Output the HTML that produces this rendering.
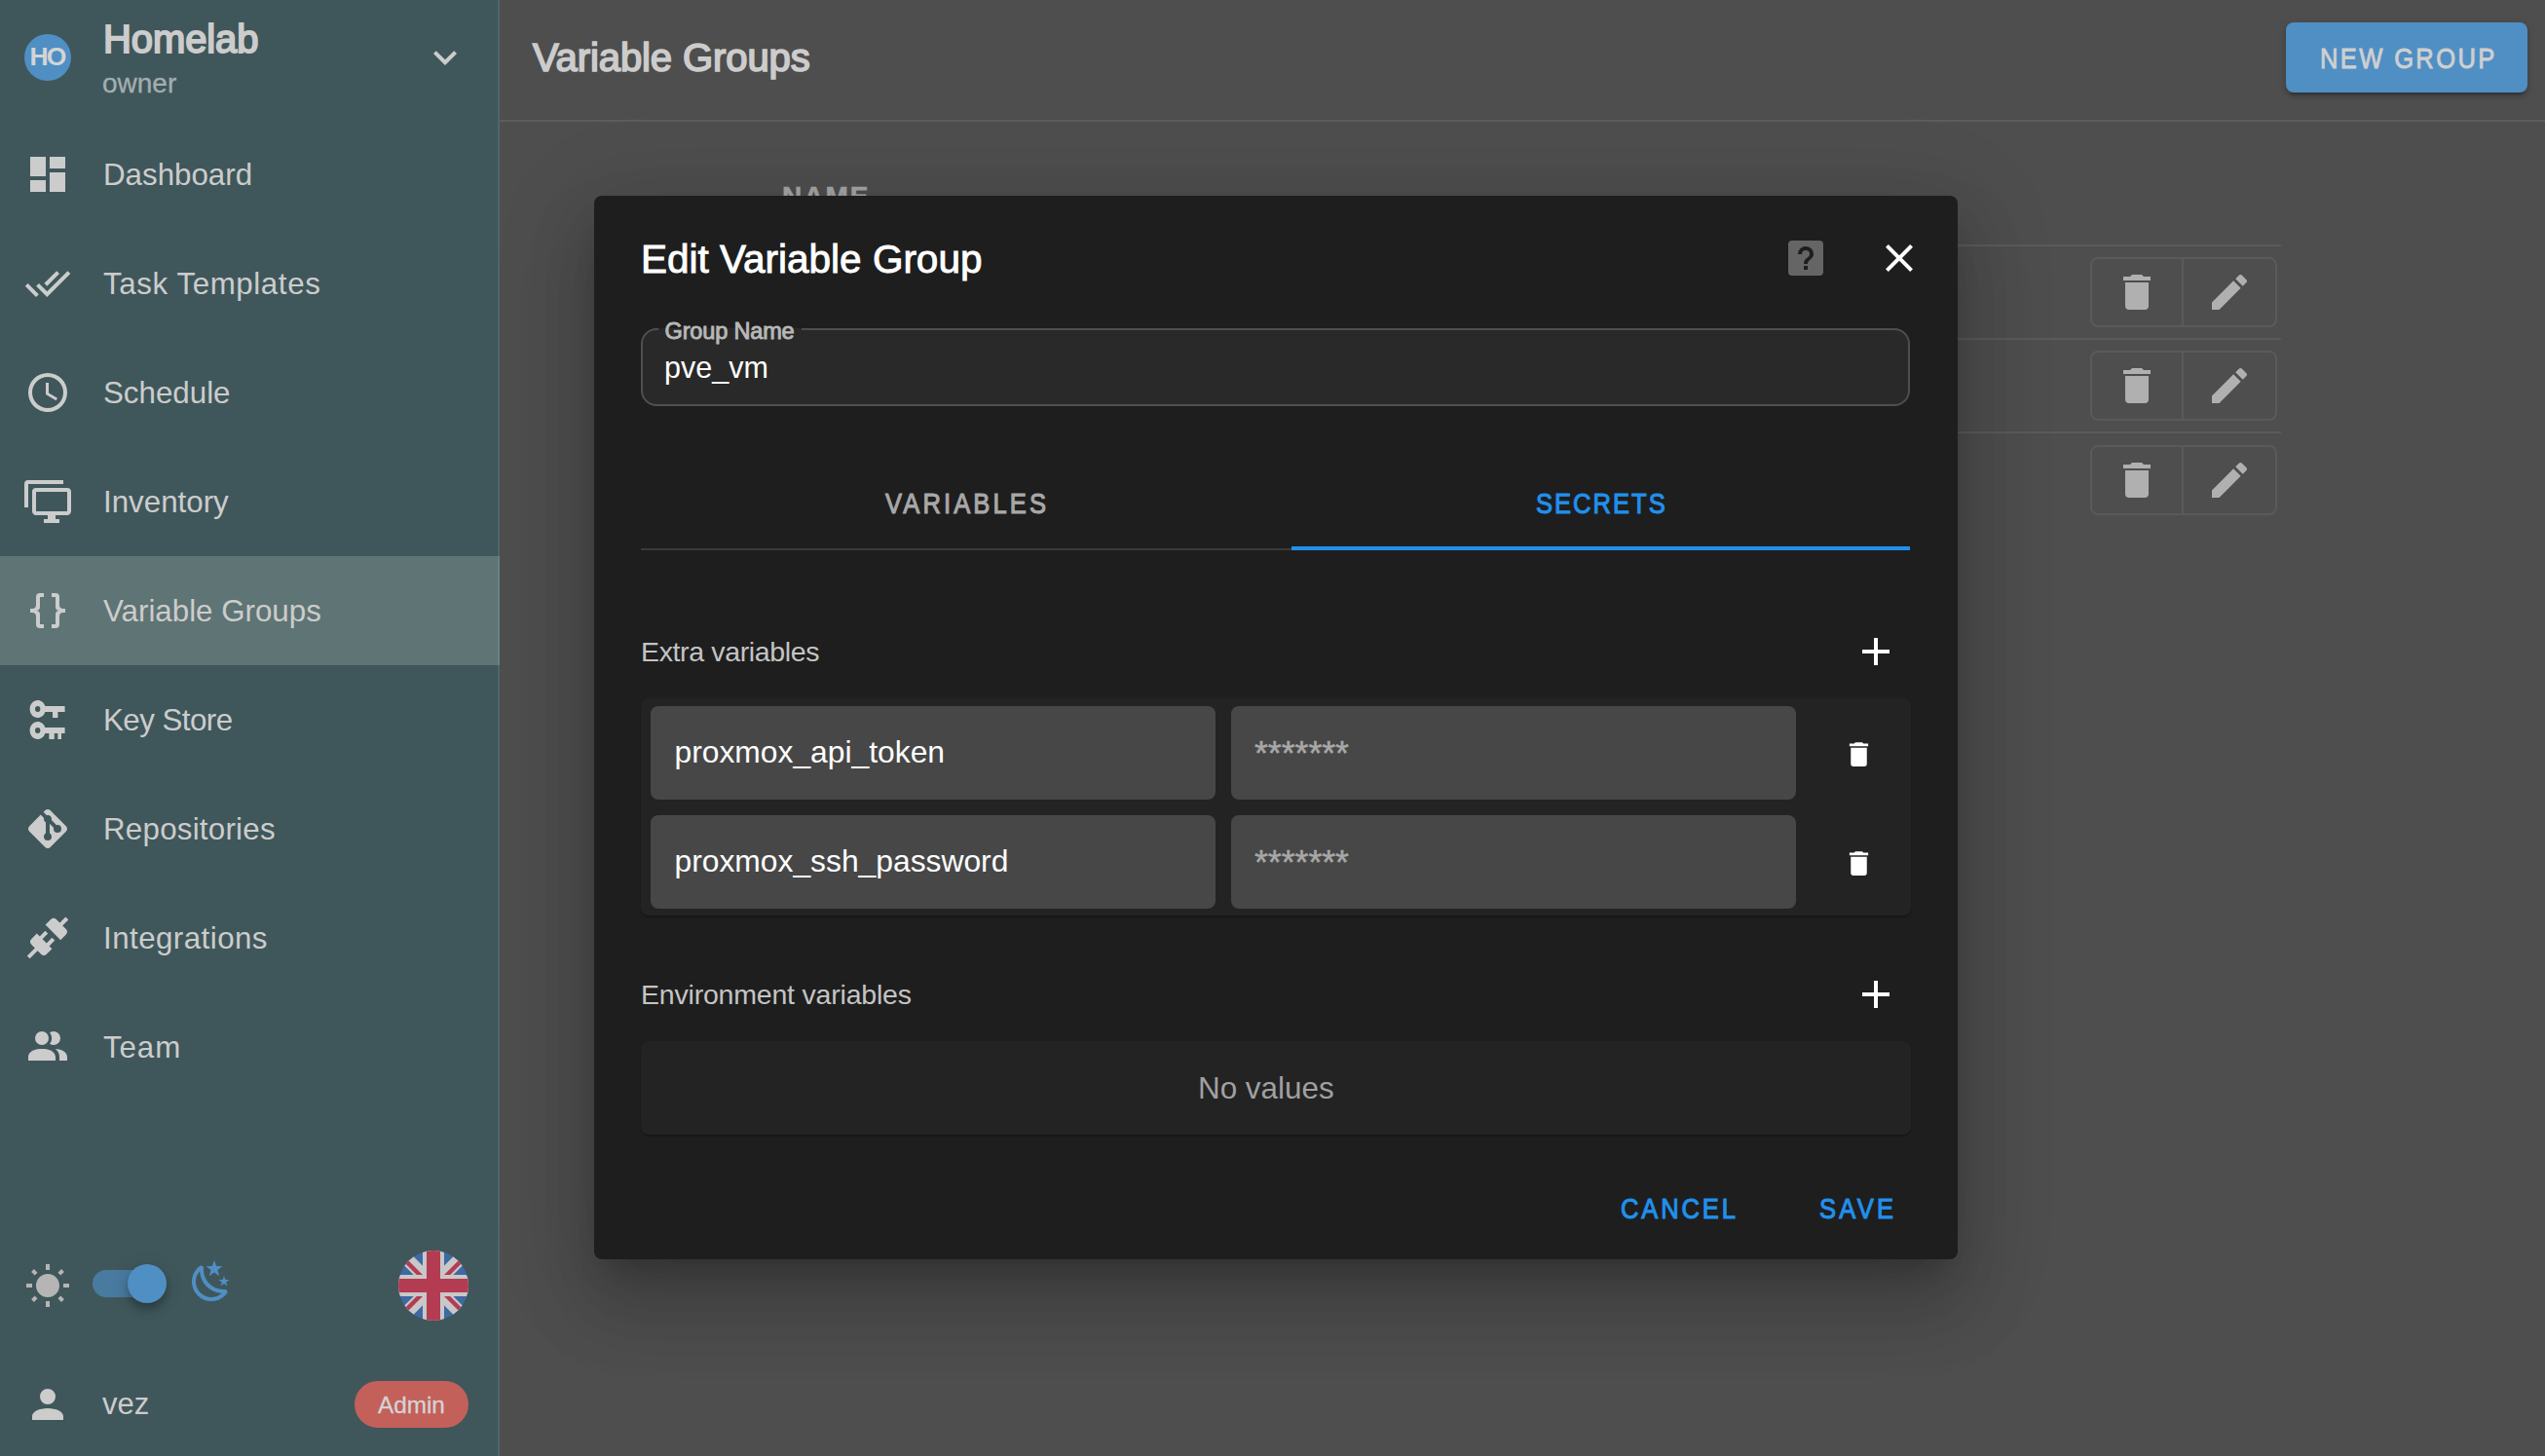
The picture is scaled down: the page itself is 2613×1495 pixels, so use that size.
<!DOCTYPE html>
<html><head><meta charset="utf-8">
<style>
html,body{margin:0;padding:0}
body{width:2613px;height:1495px;overflow:hidden;position:relative;background:#4e4e4e;font-family:"Liberation Sans",sans-serif}
.a{position:absolute}
.t{position:absolute;line-height:1;white-space:nowrap}
svg{position:absolute;display:block}
#sb{left:0;top:0;width:511px;height:1495px;background:#3f575b;border-right:2px solid #4f666a}
.nav{color:#cccccc;font-size:31.3px}
.ic{fill:#cccccc}
.btn{font-size:29px;transform:scaleX(.88);transform-origin:0 0}
.kf{width:580px;height:96px;background:#474747;border-radius:8px}
</style></head><body>

<!-- SIDEBAR -->
<div id="sb" class="a">
  <!-- header -->
  <div class="a" style="left:25px;top:35px;width:48px;height:48px;border-radius:50%;background:#4f8fc4"></div>
  <div class="t" style="left:30.5px;top:45px;font-size:26.5px;font-weight:bold;color:#d4d4d4;letter-spacing:-2px">HO</div>
  <div class="t" style="left:106px;top:20.3px;font-size:40px;letter-spacing:-0.1px;color:#cccccc;-webkit-text-stroke:1.9px #cccccc">Homelab</div>
  <div class="t" style="left:105px;top:71.5px;font-size:28px;color:#a4aeaf;-webkit-text-stroke:0.3px #a4aeaf">owner</div>
  <svg style="left:433px;top:35px" width="48" height="48" viewBox="0 0 24 24"><path class="ic" d="M7.41,8.58L12,13.17L16.59,8.58L18,10L12,16L6,10L7.41,8.58Z"/></svg>

  <!-- active -->
  <div class="a" style="left:0;top:571px;width:513px;height:112px;background:#5f7474"></div>
  <div class="a" style="left:511px;top:571px;width:2px;height:112px;background:#6b8080"></div>

  <!-- nav items: item i top=123+112i, icon top = top+32, text baseline = top+67 -->
  <svg style="left:25px;top:155px" width="48" height="48" viewBox="0 0 24 24"><path class="ic" d="M13,3V9H21V3M13,21H21V11H13M3,21H11V15H3M3,13H11V3H3V13Z"/></svg>
  <div class="t nav" style="left:106px;top:163.5px">Dashboard</div>

  <svg style="left:25px;top:267px" width="48" height="48" viewBox="0 0 24 24"><path class="ic" d="M0.41,13.41L6,19L7.41,17.58L1.83,12M22.24,5.58L11.66,16.17L7.5,12L6.07,13.41L11.66,19L23.66,7M18,7L16.59,5.58L10.24,11.93L11.66,13.34L18,7Z"/></svg>
  <div class="t nav" style="left:106px;top:275.5px;letter-spacing:0.59px">Task Templates</div>

  <svg style="left:25px;top:379px" width="48" height="48" viewBox="0 0 24 24"><path class="ic" d="M12,20A8,8 0 0,0 20,12A8,8 0 0,0 12,4A8,8 0 0,0 4,12A8,8 0 0,0 12,20M12,2A10,10 0 0,1 22,12A10,10 0 0,1 12,22C6.47,22 2,17.5 2,12A10,10 0 0,1 12,2M12.5,7V12.25L17,14.92L16.25,16.15L11,13V7H12.5Z"/></svg>
  <div class="t nav" style="left:106px;top:387.5px">Schedule</div>

  <svg style="left:25px;top:491px" width="48" height="48" viewBox="0 0 24 24"><path class="ic" d="M22,17V7H6V17H22M22,5A2,2 0 0,1 24,7V17C24,18.11 23.1,19 22,19H16V21H18V23H10V21H12V19H6C4.89,19 4,18.11 4,17V7A2,2 0 0,1 6,5H22M2,3V15H0V3A2,2 0 0,1 2,1H20V3H2Z"/></svg>
  <div class="t nav" style="left:106px;top:499.5px">Inventory</div>

  <svg style="left:25px;top:603px" width="48" height="48" viewBox="0 0 24 24"><path class="ic" d="M8,3A2,2 0 0,0 6,5V9A2,2 0 0,1 4,11H3V13H4A2,2 0 0,1 6,15V19A2,2 0 0,0 8,21H10V19H8V14A2,2 0 0,0 6,12A2,2 0 0,0 8,10V5H10V3M16,3A2,2 0 0,1 18,5V9A2,2 0 0,0 20,11H21V13H20A2,2 0 0,0 18,15V19A2,2 0 0,1 16,21H14V19H16V14A2,2 0 0,1 18,12A2,2 0 0,1 16,10V5H14V3H16Z"/></svg>
  <div class="t nav" style="left:106px;top:611.5px">Variable Groups</div>

  <svg style="left:27.4px;top:715px" width="43.2" height="48" viewBox="0 0 24 24" preserveAspectRatio="none"><path class="ic" d="M6.5,2C8.46,2 10.13,3.25 10.74,5H22V8H18V11H15V8H10.74C10.13,9.75 8.46,11 6.5,11C4,11 2,9 2,6.5C2,4 4,2 6.5,2M6.5,5A1.5,1.5 0 0,0 5,6.5A1.5,1.5 0 0,0 6.5,8A1.5,1.5 0 0,0 8,6.5A1.5,1.5 0 0,0 6.5,5M6.5,13C8.46,13 10.13,14.25 10.74,16H22V19H20V22H18V19H16V22H13V19H10.74C10.13,20.750 8.46,22 6.5,22C4,22 2,20 2,17.5C2,15 4,13 6.5,13M6.5,16A1.5,1.5 0 0,0 5,17.5A1.5,1.5 0 0,0 6.5,19A1.5,1.5 0 0,0 8,17.5A1.5,1.5 0 0,0 6.5,16Z"/></svg>
  <div class="t nav" style="left:106px;top:723.5px;letter-spacing:-0.54px">Key Store</div>

  <svg style="left:25px;top:827px" width="48" height="48" viewBox="0 0 24 24"><path class="ic" d="M2.6,10.59L8.38,4.8L10.07,6.5C9.83,7.35 10.22,8.28 11,8.73V14.27C10.4,14.61 10,15.26 10,16A2,2 0 0,0 12,18A2,2 0 0,0 14,16C14,15.26 13.6,14.61 13,14.270V9.41L15.07,11.5C15,11.65 15,11.82 15,12A2,2 0 0,0 17,14A2,2 0 0,0 19,12A2,2 0 0,0 17,10C16.82,10 16.65,10 16.5,10.07L13.93,7.5C14.19,6.57 13.71,5.55 12.78,5.16C12.35,5 11.9,4.96 11.5,5.07L9.8,3.38L10.59,2.6C11.37,1.81 12.63,1.81 13.41,2.6L21.4,10.59C22.19,11.37 22.19,12.63 21.4,13.41L13.41,21.4C12.63,22.19 11.37,22.19 10.59,21.4L2.6,13.41C1.81,12.63 1.81,11.37 2.6,10.59Z"/></svg>
  <div class="t nav" style="left:106px;top:835.5px;letter-spacing:0.24px">Repositories</div>

  <svg style="left:25px;top:939px" width="48" height="48" viewBox="0 0 24 24"><path class="ic" d="M21.4 7.5C22.2 8.3 22.2 9.6 21.4 10.3L18.6 13.1L10.8 5.3L13.6 2.5C14.4 1.7 15.7 1.7 16.4 2.5L18.200 4.3L21.2 1.3L22.6 2.7L19.6 5.7L21.4 7.5M15.6 13.3L14.2 11.9L11.4 14.7L9.3 12.6L12.1 9.8L10.7 8.4L7.9 11.2L6.4 9.8L3.6 12.6C2.8 13.4 2.8 14.7 3.6 15.4L5.4 17.2L1.4 21.2L2.8 22.6L6.8 18.6L8.6 20.4C9.4 21.2 10.7 21.2 11.4 20.4L14.2 17.6L12.8 16.2L15.6 13.3Z"/></svg>
  <div class="t nav" style="left:106px;top:947.5px;letter-spacing:0.45px">Integrations</div>

  <svg style="left:25px;top:1051px" width="48" height="48" viewBox="0 0 24 24"><path class="ic" d="M16 17V19H2V17S2 13 9 13 16 17 16 17M12.5 7.5A3.5 3.5 0 1 0 9 11A3.5 3.5 0 0 0 12.5 7.5M15.94 13A5.32 5.32 0 0 1 18 17V19H22V17S22 13.37 15.94 13M15 4A3.39 3.39 0 0 0 13.07 4.59A5 5 0 0 1 13.07 10.41A3.39 3.39 0 0 0 15 11A3.5 3.5 0 0 0 15 4Z"/></svg>
  <div class="t nav" style="left:106px;top:1059.5px;letter-spacing:0.9px">Team</div>

  <!-- BOTTOM_SIDEBAR -->
  <svg style="left:24.6px;top:1296.7px" width="48" height="48" viewBox="0 0 24 24"><path fill="#b5b5b5" d="M3.55,18.54L4.96,19.95L6.76,18.16L5.34,16.74M11,22.45C11.320,22.45 13,22.45 13,22.45V19.5H11M12,5.5A6,6 0 0,0 6,11.5A6,6 0 0,0 12,17.5A6,6 0 0,0 18,11.5C18,8.18 15.31,5.5 12,5.5M20,12.5H23V10.5H20M17.24,18.16L19.04,19.95L20.45,18.54L18.66,16.74M20.45,4.46L19.04,3.05L17.24,4.84L18.66,6.26M13,0.55H11V3.5H13M4,10.5H1V12.5H4M6.76,4.84L4.96,3.05L3.55,4.46L5.34,6.26L6.76,4.84Z"/></svg>
  <div class="a" style="left:95px;top:1304px;width:72px;height:28px;border-radius:14px;background:#497a9f"></div>
  <div class="a" style="left:131px;top:1298px;width:40px;height:40px;border-radius:50%;background:#4f8fc4;box-shadow:0 4px 8px -2px rgba(0,0,0,.2),0 8px 10px 0 rgba(0,0,0,.14),0 2px 20px 0 rgba(0,0,0,.12)"></div>
  <svg style="left:193px;top:1292px" width="48" height="48" viewBox="0 0 24 24"><path fill="#4f8fc4" d="M17.75,4.09L15.22,6.03L16.13,9.09L13.5,7.28L10.87,9.09L11.78,6.03L9.25,4.09L12.44,4L13.5,1L14.56,4L17.75,4.09M21.25,11L19.61,12.25L20.2,14.23L18.5,13.06L16.8,14.23L17.39,12.25L15.75,11L17.81,10.95L18.5,9L19.19,10.95L21.25,11M18.97,15.95C19.8,15.87 20.69,17.05 20.16,17.8C19.84,18.25 19.5,18.67 19.08,19.07C15.17,23 8.84,23 4.94,19.07C1.03,15.17 1.03,8.83 4.94,4.93C5.34,4.53 5.76,4.17 6.21,3.85C6.96,3.32 8.14,4.21 8.06,5.04C7.79,7.9 8.75,10.87 10.95,13.06C13.14,15.26 16.1,16.22 18.97,15.95M17.33,17.97C14.5,17.81 11.7,16.64 9.53,14.5C7.36,12.31 6.2,9.5 6.04,6.68C3.23,9.82 3.34,14.64 6.35,17.66C9.37,20.67 14.19,20.78 17.33,17.97Z"/></svg>
  <svg style="left:409px;top:1284px" width="72" height="72" viewBox="0 0 72 72">
    <defs><clipPath id="fc"><circle cx="36" cy="36" r="36"/></clipPath></defs>
    <g clip-path="url(#fc)">
      <rect width="72" height="72" fill="#3f69a3"/>
      <path d="M-10,-10 L82,82 M82,-10 L-10,82" stroke="#c8c8c8" stroke-width="13.2"/>
      <path d="M-10,-10 L36,36" stroke="#b43c52" stroke-width="4.4" transform="translate(-1.56,1.56)"/>
      <path d="M82,82 L36,36" stroke="#b43c52" stroke-width="4.4" transform="translate(1.56,-1.56)"/>
      <path d="M82,-10 L36,36" stroke="#b43c52" stroke-width="4.4" transform="translate(1.56,1.56)"/>
      <path d="M-10,82 L36,36" stroke="#b43c52" stroke-width="4.4" transform="translate(-1.56,-1.56)"/>
      <rect x="25" y="0" width="22" height="72" fill="#c8c8c8"/>
      <rect x="0" y="25" width="72" height="22" fill="#c8c8c8"/>
      <rect x="29" y="0" width="14" height="72" fill="#b43c52"/>
      <rect x="0" y="29" width="72" height="14" fill="#b43c52"/>
    </g>
  </svg>
  <svg style="left:24.7px;top:1417.5px" width="48" height="48" viewBox="0 0 24 24"><path class="ic" d="M12,4A4,4 0 0,1 16,8A4,4 0 0,1 12,12A4,4 0 0,1 8,8A4,4 0 0,1 12,4M12,14C16.42,14 20,15.79 20,18V20H4V18C4,15.79 7.58,14 12,14Z"/></svg>
  <div class="t" style="left:105px;top:1426px;font-size:31px;color:#cccccc">vez</div>
  <div class="a" style="left:364px;top:1418px;width:117px;height:48px;border-radius:24px;background:#c4605a"></div>
  <div class="t" style="left:388px;top:1430.5px;font-size:24.3px;color:#d4d4d4;-webkit-text-stroke:0.3px #d4d4d4">Admin</div>
</div>

<!-- MAIN -->
<div class="t" style="left:547px;top:39px;font-size:40px;letter-spacing:-0.1px;color:#cccccc;-webkit-text-stroke:1.7px #cccccc">Variable Groups</div>
<div class="a" style="left:2347px;top:23px;width:248px;height:72px;background:#4f8fc4;border-radius:8px;box-shadow:0 6px 2px -4px rgba(0,0,0,.2),0 4px 4px 0 rgba(0,0,0,.14),0 2px 10px 0 rgba(0,0,0,.12)"></div>
<div class="t btn" style="left:2382px;top:45.8px;color:#cfcfcf;letter-spacing:2.7px;-webkit-text-stroke:0.9px #cfcfcf">NEW GROUP</div>
<div class="a" style="left:513px;top:123px;width:2100px;height:2px;background:#5d5d5d"></div>

<!-- MAIN_TABLE -->
<div class="t" style="left:803px;top:187.6px;font-size:28px;font-weight:bold;color:#a6a6a6;letter-spacing:2px;-webkit-text-stroke:0.6px #a6a6a6">NAME</div>
<div class="a" style="left:780px;top:251px;width:1562px;height:2px;background:#5b5b5b"></div>
<div class="a" style="left:780px;top:347px;width:1562px;height:2px;background:#5b5b5b"></div>
<div class="a" style="left:780px;top:443px;width:1562px;height:2px;background:#5b5b5b"></div>
<!-- button groups -->
<div class="a" style="left:2146px;top:264px;width:188px;height:68px;border:2px solid #5a5a5a;border-radius:8px"></div>
<div class="a" style="left:2240px;top:264px;width:2px;height:72px;background:#5a5a5a"></div>
<svg style="left:2170px;top:276px" width="48" height="48" viewBox="0 0 24 24"><path fill="#b0b0b0" d="M19,4H15.5L14.5,3H9.5L8.5,4H5V6H19M6,19A2,2 0 0,0 8,21H16A2,2 0 0,0 18,19V7H6V19Z"/></svg>
<svg style="left:2265px;top:276px" width="48" height="48" viewBox="0 0 24 24"><path fill="#b0b0b0" d="M20.71,7.04C21.1,6.65 21.1,6 20.71,5.63L18.37,3.29C18,2.9 17.35,2.9 16.96,3.29L15.12,5.12L18.87,8.87M3,17.25V21H6.75L17.81,9.93L14.06,6.18L3,17.25Z"/></svg>
<div class="a" style="left:2146px;top:360px;width:188px;height:68px;border:2px solid #5a5a5a;border-radius:8px"></div>
<div class="a" style="left:2240px;top:360px;width:2px;height:72px;background:#5a5a5a"></div>
<svg style="left:2170px;top:372px" width="48" height="48" viewBox="0 0 24 24"><path fill="#b0b0b0" d="M19,4H15.5L14.5,3H9.5L8.5,4H5V6H19M6,19A2,2 0 0,0 8,21H16A2,2 0 0,0 18,19V7H6V19Z"/></svg>
<svg style="left:2265px;top:372px" width="48" height="48" viewBox="0 0 24 24"><path fill="#b0b0b0" d="M20.71,7.04C21.1,6.65 21.1,6 20.71,5.63L18.37,3.29C18,2.9 17.35,2.9 16.96,3.29L15.12,5.12L18.87,8.87M3,17.25V21H6.75L17.81,9.93L14.06,6.18L3,17.25Z"/></svg>
<div class="a" style="left:2146px;top:457px;width:188px;height:68px;border:2px solid #5a5a5a;border-radius:8px"></div>
<div class="a" style="left:2240px;top:457px;width:2px;height:72px;background:#5a5a5a"></div>
<svg style="left:2170px;top:469px" width="48" height="48" viewBox="0 0 24 24"><path fill="#b0b0b0" d="M19,4H15.5L14.5,3H9.5L8.5,4H5V6H19M6,19A2,2 0 0,0 8,21H16A2,2 0 0,0 18,19V7H6V19Z"/></svg>
<svg style="left:2265px;top:469px" width="48" height="48" viewBox="0 0 24 24"><path fill="#b0b0b0" d="M20.71,7.04C21.1,6.65 21.1,6 20.71,5.63L18.37,3.29C18,2.9 17.35,2.9 16.96,3.29L15.12,5.12L18.87,8.87M3,17.25V21H6.75L17.81,9.93L14.06,6.18L3,17.25Z"/></svg>

<!-- MODAL -->
<div class="a" style="left:610px;top:201px;width:1400px;height:1092px;background:#1e1e1e;border-radius:8px;box-shadow:0 22px 30px -14px rgba(0,0,0,.2),0 48px 76px 6px rgba(0,0,0,.14),0 18px 92px 16px rgba(0,0,0,.12)"></div>

<!-- MODAL -->
<!-- MODAL_CONTENT -->
<div class="t" style="left:658px;top:245.5px;font-size:40.5px;color:#ffffff;-webkit-text-stroke:0.9px #ffffff">Edit Variable Group</div>
<svg style="left:1830px;top:240.5px" width="48" height="48" viewBox="0 0 24 24"><path fill="#656565" d="M5,3H19A2,2 0 0,1 21,5V19A2,2 0 0,1 19,21H5A2,2 0 0,1 3,19V5A2,2 0 0,1 5,3Z"/><path fill="#1e1e1e" d="M11,18H13V16H11V18M12,6A4,4 0 0,0 8,10H10A2,2 0 0,1 12,8A2,2 0 0,1 14,10C14,12 11,11.75 11,15H13C13,12.75 16,12.5 16,10A4,4 0 0,0 12,6Z"/></svg>
<svg style="left:1926px;top:241px" width="48" height="48" viewBox="0 0 24 24"><path fill="#ffffff" d="M19,6.41L17.59,5L12,10.59L6.41,5L5,6.41L10.59,12L5,17.59L6.41,19L12,13.410L17.59,19L19,17.59L13.41,12L19,6.41Z"/></svg>

<!-- group name field -->
<div class="a" style="left:658px;top:337px;width:1299px;height:76px;border:2px solid #4f4f4f;border-radius:16px;background:#292929"></div>
<div class="a" style="left:676px;top:330px;width:147px;height:7px;background:#1e1e1e"></div>
<div class="a" style="left:676px;top:337px;width:147px;height:5px;background:#292929"></div>
<div class="t" style="left:682.5px;top:329px;font-size:23.5px;letter-spacing:-0.15px;color:#b8b8b8;-webkit-text-stroke:0.9px #b8b8b8">Group Name</div>
<div class="t" style="left:682px;top:362px;font-size:30.5px;color:#ffffff">pve_vm</div>

<!-- tabs -->
<div class="t btn" style="left:909px;top:502.5px;color:#a8a8a8;letter-spacing:3.55px;-webkit-text-stroke:1.1px #a8a8a8">VARIABLES</div>
<div class="t btn" style="left:1577px;top:502.5px;color:#2190ec;letter-spacing:2.3px;-webkit-text-stroke:1.1px #2190ec">SECRETS</div>
<div class="a" style="left:658px;top:563px;width:1303px;height:2px;background:#3a3a3a"></div>
<div class="a" style="left:1326px;top:561px;width:635px;height:4px;background:#2190ec"></div>

<!-- extra variables -->
<div class="t" style="left:658px;top:654.7px;font-size:28.5px;letter-spacing:-0.36px;color:#c4c4c4">Extra variables</div>
<svg style="left:1902px;top:645px" width="48" height="48" viewBox="0 0 24 24"><path fill="#ffffff" d="M19,13H13V19H11V13H5V11H11V5H13V11H19V13Z"/></svg>
<div class="a" style="left:658px;top:717px;width:1304px;height:223px;background:#232323;border-radius:8px;box-shadow:0 2px 2px rgba(0,0,0,.25)"></div>
<div class="a kf" style="left:668px;top:725px"></div>
<div class="a kf" style="left:1264px;top:725px"></div>
<div class="a kf" style="left:668px;top:837px"></div>
<div class="a kf" style="left:1264px;top:837px"></div>
<div class="t" style="left:692.5px;top:757px;font-size:31.8px;color:#ffffff">proxmox_api_token</div>
<div class="t" style="left:692.5px;top:869px;font-size:31.8px;color:#ffffff">proxmox_ssh_password</div>
<div class="t" style="left:1288px;top:756px;font-size:35.6px;color:#a8a8a8;-webkit-text-stroke:0.5px #a8a8a8">*******</div>
<div class="t" style="left:1288px;top:868px;font-size:35.6px;color:#a8a8a8;-webkit-text-stroke:0.5px #a8a8a8">*******</div>
<svg style="left:1891.5px;top:758px" width="33" height="33" viewBox="0 0 24 24"><path fill="#ffffff" d="M19,4H15.5L14.5,3H9.5L8.5,4H5V6H19M6,19A2,2 0 0,0 8,21H16A2,2 0 0,0 18,19V7H6V19Z"/></svg>
<svg style="left:1891.5px;top:870px" width="33" height="33" viewBox="0 0 24 24"><path fill="#ffffff" d="M19,4H15.5L14.5,3H9.5L8.5,4H5V6H19M6,19A2,2 0 0,0 8,21H16A2,2 0 0,0 18,19V7H6V19Z"/></svg>

<!-- environment variables -->
<div class="t" style="left:658px;top:1007.4px;font-size:28.5px;letter-spacing:-0.2px;color:#c4c4c4">Environment variables</div>
<svg style="left:1902px;top:997px" width="48" height="48" viewBox="0 0 24 24"><path fill="#ffffff" d="M19,13H13V19H11V13H5V11H11V5H13V11H19V13Z"/></svg>
<div class="a" style="left:658px;top:1069px;width:1304px;height:96px;background:#232323;border-radius:8px;box-shadow:0 2px 2px rgba(0,0,0,.25)"></div>
<div class="t" style="left:1230px;top:1101.5px;font-size:31.4px;color:#a0a0a0">No values</div>

<!-- actions -->
<div class="t btn" style="left:1664px;top:1227.2px;color:#2190ec;letter-spacing:3.25px;-webkit-text-stroke:1.1px #2190ec">CANCEL</div>
<div class="t btn" style="left:1868px;top:1227.2px;color:#2190ec;letter-spacing:3.75px;-webkit-text-stroke:1.1px #2190ec">SAVE</div>

</body></html>
